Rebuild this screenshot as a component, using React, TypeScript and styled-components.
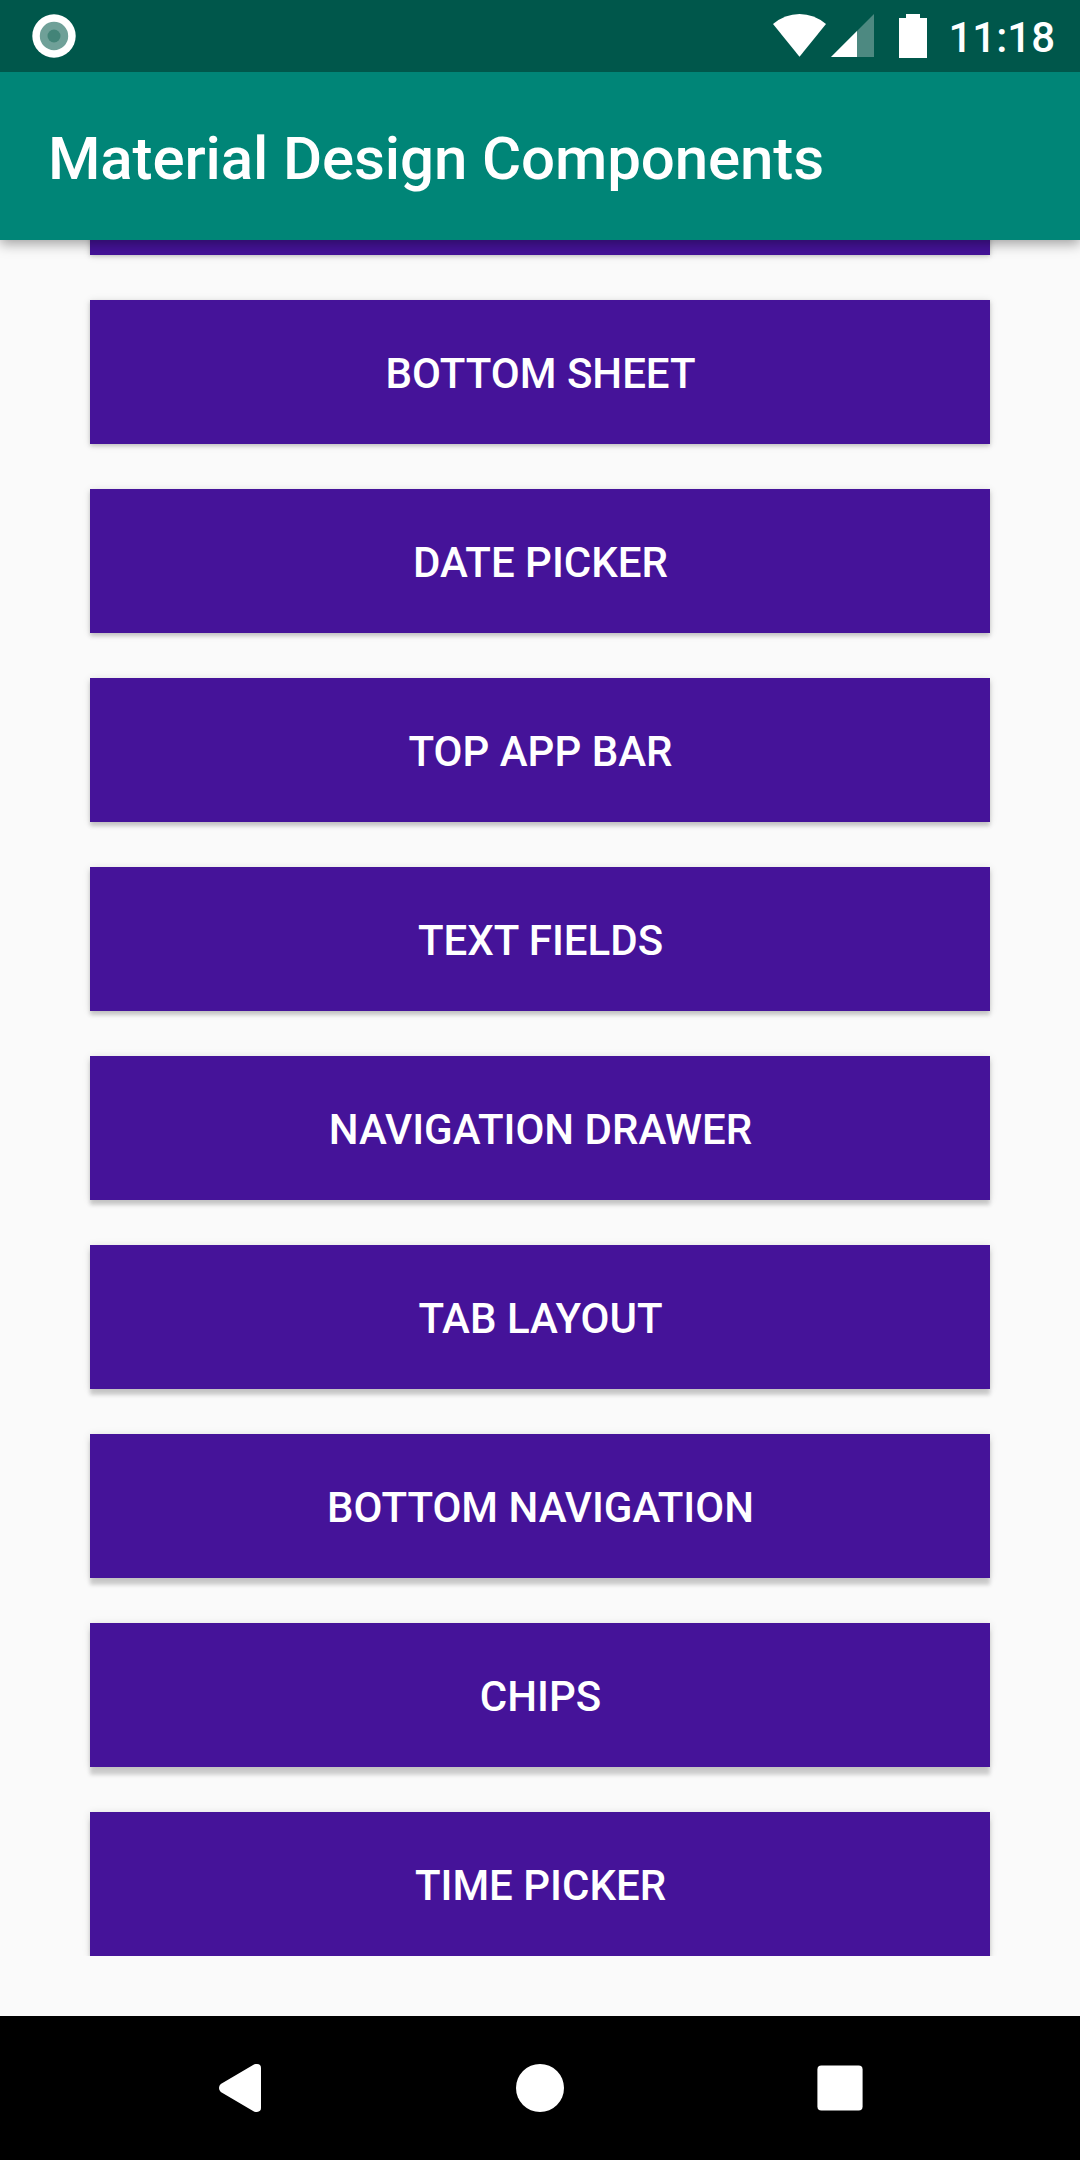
import React from "react";
import styled, { createGlobalStyle } from "styled-components";

const Global = createGlobalStyle`
  * { box-sizing: border-box; }
  body { margin: 0; font-family: Roboto, sans-serif; background: #fafafa; }
`;
const Screen = styled.div`
  width: 1080px;
  height: 2160px;
  display: flex;
  flex-direction: column;
  overflow: hidden;
  background: #fafafa;
`;
const StatusBar = styled.header`
  height: 72px;
  flex: none;
  background: #00574b;
  display: flex;
  align-items: center;
  justify-content: space-between;
  padding: 0 25px 0 32px;
  z-index: 3;
  svg { display: block; }
`;
const StatusIcons = styled.div`
  display: flex;
  align-items: center;
`;
const Clock = styled.span`
  margin-left: 17px;
  padding-top: 4px;
  font-size: 42px;
  line-height: 68px;
  font-weight: 500;
  color: #fff;
`;
const AppBar = styled.div`
  height: 168px;
  flex: none;
  background: #008577;
  display: flex;
  align-items: center;
  padding-left: 48px;
  z-index: 2;
  box-shadow: 0 4px 12px rgba(0, 0, 0, 0.36);
`;
const Title = styled.h1`
  margin: 0;
  padding-top: 6px;
  font-size: 60px;
  font-weight: 500;
  letter-spacing: -0.11px;
  color: #fff;
  line-height: 80px;
  white-space: nowrap;
`;
const List = styled.main`
  height: 1716px;
  margin-bottom: 60px;
  flex: none;
  overflow: hidden;
  display: flex;
  flex-direction: column;
  gap: 45px;
  padding: 0 90px;
`;
const Item = styled.button<{ $depth: number }>`
  flex: none;
  height: 144px;
  border: 0;
  padding: 4px 0 0 1px;
  background: #451399;
  color: #fff;
  font: 500 42px/50px Roboto, sans-serif;
  text-transform: uppercase;
  box-shadow: 0 1px 8px rgba(0, 0, 0, 0.12), 0 ${(p) => p.$depth}px 4px rgba(0, 0, 0, 0.16);
  &:first-child { margin-top: -129px; }
`;
const NavBar = styled.nav`
  height: 144px;
  flex: none;
  background: #000;
  display: flex;
  align-items: center;
  justify-content: center;
  gap: 252px;
`;
const NavButton = styled.button`
  width: 48px;
  height: 48px;
  padding: 0;
  border: 0;
  background: none;
  svg { display: block; }
`;

const RecordIcon = () => (
  <svg width="44" height="44" viewBox="0 0 44 44">
    <circle cx="22" cy="22" r="21.7" fill="#fff" />
    <circle cx="22" cy="22" r="14.2" fill="#6fa098" />
    <circle cx="22" cy="22" r="6.5" fill="#438478" />
  </svg>
);

const SystemIcons = () => (
  <svg width="158" height="44" viewBox="773 14 158 44" fill="#fff">
    <path d="M773 24Q785 14 799.5 14T826 24L799.5 56.7Z" />
    <path d="M874 14V57H831Z" fillOpacity=".3" />
    <path d="M857 31V57H831Z" />
    <path d="M906 14H920V18H927V58H899V18H906Z" />
  </svg>
);

const items = [
  "App Bar", "Bottom Sheet", "Date Picker", "Top App Bar", "Text Fields",
  "Navigation Drawer", "Tab Layout", "Bottom Navigation", "Chips", "Time Picker",
];

export default function App() {
  return (
    <Screen>
      <Global />
      <StatusBar>
        <RecordIcon />
        <StatusIcons>
          <SystemIcons />
          <Clock>11:18</Clock>
        </StatusIcons>
      </StatusBar>
      <AppBar><Title>Material Design Components</Title></AppBar>
      <List>
        {items.map((t, i) => (
          <Item key={t} $depth={1 + i * 0.85} aria-label={t}>{i ? t : ""}</Item>
        ))}
      </List>
      <NavBar>
        <NavButton aria-label="Back">
          <svg width="48" height="48" viewBox="0 0 48 48" fill="#fff">
            <path d="M37.5 .7Q39 -.3 41 .1Q45 .3 45 4V44Q45 47.7 41 47.9Q39 48.3 37.5 47.3L4.8 28Q3 26.5 3 24T4.8 20Z" />
          </svg>
        </NavButton>
        <NavButton aria-label="Home">
          <svg width="48" height="48" viewBox="0 0 48 48" fill="#fff"><circle cx="24" cy="24" r="24" /></svg>
        </NavButton>
        <NavButton aria-label="Recents">
          <svg width="48" height="48" viewBox="0 0 48 48" fill="#fff"><rect x="1.4" y="1.4" width="45.2" height="45.2" rx="4" /></svg>
        </NavButton>
      </NavBar>
    </Screen>
  );
}
